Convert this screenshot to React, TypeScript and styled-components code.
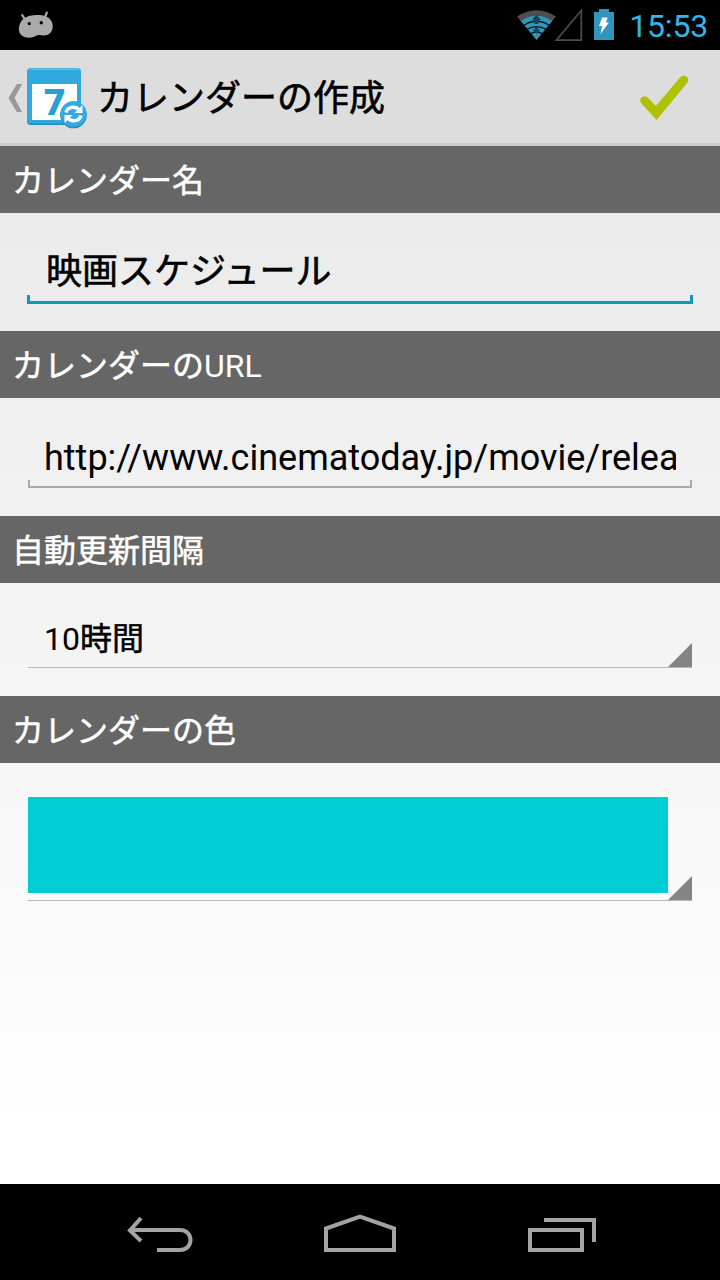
import React from "react";
import styled, { createGlobalStyle } from "styled-components";

const GlobalStyle = createGlobalStyle`
  * { box-sizing: border-box; }
  body {
    margin: 0;
    background: #000;
    font-family: Roboto, "Noto Sans CJK JP", sans-serif;
    color: #000;
  }
`;

const Screen = styled.div`
  display: flex;
  flex-direction: column;
  width: 720px;
  height: 1280px;
  overflow: hidden;
`;

const StatusBar = styled.header`
  display: flex;
  align-items: flex-start;
  justify-content: space-between;
  height: 50px;
  flex: none;
  padding-left: 18px;
  padding-right: 12px;
  background: #000;
`;

const StatusIcons = styled.div`
  display: flex;
`;

const Clock = styled.span`
  margin-left: 14px;
  font-size: 32px;
  line-height: 52px;
  letter-spacing: -0.2px;
  color: #33b5e5;
`;

const ActionBar = styled.div`
  display: flex;
  align-items: flex-start;
  height: 96px;
  flex: none;
  padding-left: 6px;
  background: #ddd;
  border-bottom: 3px solid #cbcbcb;
`;

const Title = styled.h1`
  flex: 1;
  margin: 0 0 0 7px;
  font-size: 36px;
  font-weight: 400;
  line-height: 99px;
  height: 93px;
  -webkit-text-stroke: 0.6px currentColor;
`;

const Form = styled.main`
  flex: 1;
  background: linear-gradient(#e9e9e9, #fff 95%);
`;

const SectionHeader = styled.h2`
  height: 67px;
  margin: 0;
  padding: 2px 12px 0;
  background: #666;
  color: #fff;
  font-size: 32px;
  font-weight: 400;
  line-height: 67px;
  -webkit-text-stroke: 0.5px currentColor;
`;

const Latin = styled.span`
  -webkit-text-stroke: 0;
`;

const Field = styled.div<{ $active?: boolean }>`
  height: 118px;
  padding: 32px ${(p) => (p.$active ? 27 : 28)}px 0;
`;

const FieldText = styled.div<{ $japanese?: boolean }>`
  height: 50px;
  margin: 0 16px;
  padding-left: ${(p) => (p.$japanese ? 3 : 0)}px;
  overflow: hidden;
  white-space: nowrap;
  font-size: 36px;
  line-height: ${(p) => (p.$japanese ? 55 : 56)}px;
  -webkit-text-stroke: ${(p) => (p.$japanese ? "0.6px currentColor" : "0")};
`;

const Underline = styled.div<{ $active?: boolean }>`
  height: ${(p) => (p.$active ? 9 : 8)}px;
  border: ${(p) => (p.$active ? "3px solid #0f97c1" : "2px solid #a8a8a8")};
  border-top: 0;
`;

const Spinner = styled.div<{ $height: number; $top: number }>`
  display: grid;
  grid-template-columns: 1fr 24px;
  align-items: end;
  height: ${(p) => p.$height}px;
  margin: ${(p) => p.$top}px 28px 0;
  border-bottom: 1px solid #b8b8b8;
`;

const SpinnerBlock = styled.div`
  height: 113px;
  display: flow-root;
`;

const SpinnerText = styled.div`
  align-self: start;
  padding-left: 16px;
  font-size: 32px;
  line-height: 48px;
  -webkit-text-stroke: 0.5px currentColor;
`;

const Swatch = styled.div`
  align-self: start;
  height: 96px;
  background: #00ced4;
`;

const Corner = styled.div`
  height: 24px;
  background: #848484;
  clip-path: polygon(100% 0, 100% 100%, 0 100%);
`;

const NavBar = styled.nav`
  display: flex;
  justify-content: space-between;
  height: 96px;
  flex: none;
  padding: 24px 116px 0 118px;
  background: #000;
`;

const NavIcon = styled.svg`
  fill: none;
  stroke: #a3a3a3;
  stroke-width: 4;
`;

const IconDigit = styled.text`
  font-family: "DejaVu Sans", sans-serif;
  font-size: 35px;
  font-weight: 700;
  fill: #2b9fd5;
`;

const Robot = () => (
  <svg width="36" height="50" viewBox="18 0 36 50">
    <path d="M22.2 15.2l3.2 5M46.8 12.6l-2 5" stroke="#aaa" strokeWidth="2.2" strokeLinecap="round" />
    <path
      d="M24 18.5C29 14.5 42 14 47 17c4 2 6 6 5.700 10c-.3 5-4 8.500-9 8.500c-3 0-4.500-1-7 0c-2 1-4 2.200-8 2.200c-6 0-10-3.500-9.800-9c.1-4 1.800-8 5.100-10.200z"
      fill="#aaa"
    />
    <circle cx="29.300" cy="23.600" r="1.700" fill="#000" />
    <circle cx="41.300" cy="22.800" r="1.700" fill="#000" />
  </svg>
);

const Signals = () => (
  <svg width="98" height="50" viewBox="517 0 98 50">
    <path d="M517 16.500Q536.500 4 556 16.500L551.500 22Q536.500 12 521.500 22z" fill="#504d4d" />
    <path d="M520.800 21Q536.500 10.500 552.200 21L536.500 40z" fill="#3197bd" />
    <g fill="none" stroke="#06141b" strokeWidth="1.400">
      <path d="M523.500 25.500Q536.500 17 549.500 25.500M526.500 29.700Q536.500 23.500 546.500 29.700M530 34Q536.500 30 543 34" />
    </g>
    <path d="M536.500 14.500l4.500 5.500h-2.500v4h-4v-4h-2.500zM536.500 34l-4-4.500h2.500v-3h3v3h2.500z" fill="#17445a" />
    <path d="M556.300 40.200L581.300 10.500V40.200z" fill="none" stroke="#4c4c4c" strokeWidth="1.700" />
    <path d="M599 9h10v3h5v28h-20V12h5z" fill="#3096bd" />
    <path d="M602 17.500h5.500l-1.500 5h3l-8.500 11.500 1.500-8h-3z" fill="#fff" />
  </svg>
);

const AppIcon = () => (
  <svg width="84" height="93" viewBox="6 50 84 93">
    <path d="M16.800 84h5.200l-7.500 14 7.500 14h-5.200L8.500 98z" fill="#999" />
    <rect x="27" y="68.500" width="54" height="56.500" rx="4" fill="#2488b8" />
    <rect x="27" y="68" width="54" height="55.500" rx="4" fill="#32a9de" />
    <path d="M29 69.200h50" stroke="#73b9d9" strokeWidth="1.500" />
    <path d="M32 84h45v36H32z" fill="#fff" />
    <IconDigit x="42.500" y="115">7</IconDigit>
    <circle cx="73.500" cy="115" r="13.300" fill="#248bbb" />
    <circle cx="73.500" cy="114" r="13" fill="#35aade" />
    <path d="M66 112.500c1.500-6 10-7 13.500-2M81 115.500c-1.500 6-10 7-13.500 2" fill="none" stroke="#fff" strokeWidth="3.400" />
    <path d="M82.500 105v8h-8zM64.500 123v-8h8z" fill="#fff" />
  </svg>
);

const Check = () => (
  <svg width="90" height="93" viewBox="630 50 90 93">
    <path
      d="M641.500 103.500c-3.500-4 1-9.500 5.500-6.500l9 9L680 77.500c4-4.500 10.500 0 7.500 5L656.500 120z"
      fill="#afc100"
    />
  </svg>
);

export default function App() {
  return (
    <Screen>
      <GlobalStyle />
      <StatusBar>
        <Robot />
        <StatusIcons>
          <Signals />
          <Clock>15:53</Clock>
        </StatusIcons>
      </StatusBar>
      <ActionBar>
        <AppIcon />
        <Title>カレンダーの作成</Title>
        <Check />
      </ActionBar>
      <Form>
        <SectionHeader>カレンダー名</SectionHeader>
        <Field $active>
          <FieldText $japanese>映画スケジュール</FieldText>
          <Underline $active />
        </Field>
        <SectionHeader>
          カレンダーの<Latin>URL</Latin>
        </SectionHeader>
        <Field>
          <FieldText>http://www.cinematoday.jp/movie/relea</FieldText>
          <Underline />
        </Field>
        <SectionHeader>自動更新間隔</SectionHeader>
        <SpinnerBlock>
          <Spinner $top={32} $height={53}>
            <SpinnerText>
              <Latin>10</Latin>時間
            </SpinnerText>
            <Corner />
          </Spinner>
        </SpinnerBlock>
        <SectionHeader>カレンダーの色</SectionHeader>
        <Spinner $top={34} $height={104}>
          <Swatch />
          <Corner />
        </Spinner>
      </Form>
      <NavBar>
        <NavIcon width="84" height="50" viewBox="118 1208 84 50">
          <path d="M131 1230h49c14 0 14 20 0 20h-23" />
          <path d="M141 1218l-11 12.500L141 1241" />
        </NavIcon>
        <NavIcon width="84" height="50" viewBox="319 1208 84 50">
          <path d="M326 1250v-21.500l34-12 34 12V1250z" />
        </NavIcon>
        <NavIcon width="84" height="50" viewBox="520 1208 84 50">
          <path d="M530 1230h52v20h-52zM544 1220h50v22" />
        </NavIcon>
      </NavBar>
    </Screen>
  );
}
